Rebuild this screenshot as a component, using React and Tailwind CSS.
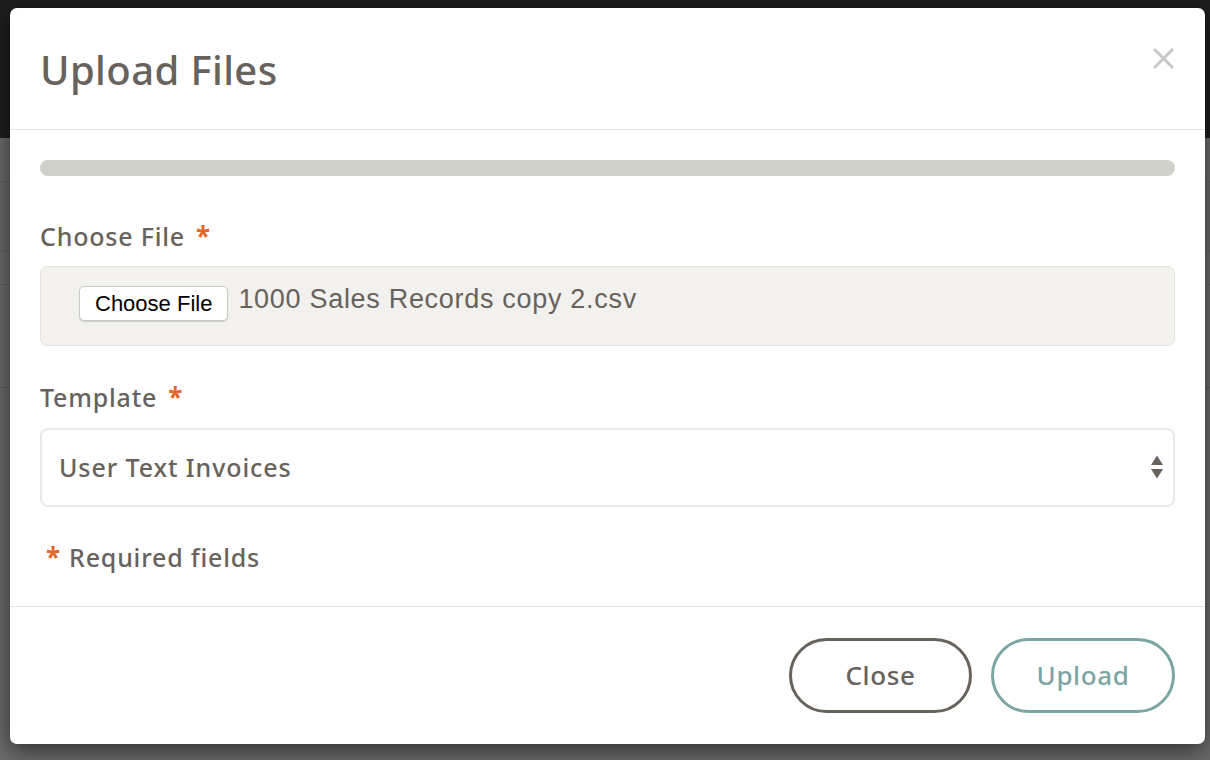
import { useState } from 'react';

const sans = { fontFamily: '"Noto Sans", "Open Sans", sans-serif' };
const sysFont = { fontFamily: '"Liberation Sans", Arial, sans-serif' };

function Asterisk({ className = '' }) {
  return <span className={`text-[#e4662a] font-bold text-[26px] tracking-normal ${className}`}>*</span>;
}

function BackgroundPage() {
  // page behind the modal, dimmed by the backdrop
  return (
    <div className="h-[760px] w-full flex flex-col bg-[#6a6a6a]">
      <div className="h-[138px] bg-[#1e1e1e] shrink-0" />
      <div className="h-[44px] border-b border-[#5e5e5e]" />
      <div className="h-[70px] border-b border-[#5e5e5e] bg-[#676767]" />
      <div className="h-[33px] border-b border-[#5e5e5e]" />
      <div className="h-[103px] border-b border-[#5b5b5b]" />
      <div className="flex-1" />
    </div>
  );
}

export default function App() {
  const [template] = useState('User Text Invoices');

  return (
    <div className="relative h-[760px] w-full overflow-hidden" style={sans}>
      <BackgroundPage />

      <div className="absolute left-[10px] top-[8px] w-[1195px] h-[736px] bg-white rounded-[7px] shadow-[0_6px_22px_rgba(0,0,0,0.55)] flex flex-col text-[#67625c]">
        {/* Header */}
        <div className="h-[122px] shrink-0 border-b border-[#e4e4e4] px-[30px] flex items-start justify-between">
          <h1 className="mt-[38px] text-[40px] leading-[48px] font-medium tracking-[0.4px]">Upload Files</h1>
          <button className="mt-[39px] mr-[1px] w-[22px] h-[22px] flex items-center justify-center">
            <svg width="21" height="21" viewBox="0 0 20 20">
              <path d="M2 2 L18 18 M18 2 L2 18" stroke="#c8c8c8" strokeWidth="2.8" strokeLinecap="square" />
            </svg>
          </button>
        </div>

        {/* Body */}
        <div className="flex-1 px-[30px] pt-[30px]">
          <div className="h-[16px] w-full rounded-full bg-[#cfd0ca]" />

          <label className="mt-[46px] flex items-center h-[30px] text-[25px] font-medium tracking-[0.8px]">
            Choose File <Asterisk className="ml-[11px] mt-[-2px]" />
          </label>
          <div className="mt-[14px] h-[80px] rounded-[7px] border border-[#e5e4df] bg-[#f2f1ee] pl-[38px] pt-[19px] flex items-start">
            <span className="h-[35px] px-[15px] flex items-center rounded-[5px] border border-[#c9c9c9] bg-white shadow-[0_1px_1px_rgba(0,0,0,0.15)] text-[22px] text-black" style={sysFont}>
              Choose File
            </span>
            <span className="ml-[10px] mt-[-5px] text-[27px] leading-[36px] tracking-[0.7px] text-[#67625c]" style={sysFont}>
              1000 Sales Records copy 2.csv
            </span>
          </div>

          <label className="mt-[37px] flex items-center h-[30px] text-[25px] font-medium tracking-[0.8px]">
            Template <Asterisk className="ml-[11px] mt-[-2px]" />
          </label>
          <div className="mt-[15px] h-[79px] rounded-[8px] border-2 border-[#eae9e4] bg-white pl-[17px] pr-[8px] flex items-center justify-between">
            <span className="text-[25px] font-medium tracking-[0.9px]">{template}</span>
            <svg width="16" height="28" viewBox="0 0 16 28">
              <path d="M2 11 L8 1.5 L14 11 Z" fill="#67625c" />
              <path d="M2 15 L14 15 L8 24.5 Z" fill="#67625c" />
            </svg>
          </div>

          <p className="mt-[36px] pl-[6px] flex items-center h-[30px] text-[25px] font-medium tracking-[0.8px]">
            <Asterisk className="mr-[8px] mt-[-2px]" />
            <span className="ml-[1px]">Required fields</span>
          </p>
        </div>

        {/* Footer */}
        <div className="h-[138px] shrink-0 border-t border-[#e4e4e4] px-[30px] flex items-center justify-end gap-[19px]">
          <button className="w-[183px] h-[75px] rounded-full border-[3px] border-[#67625c] text-[26px] font-medium tracking-[0.6px] text-[#67625c]">
            Close
          </button>
          <button className="w-[184px] h-[75px] rounded-full border-[3px] border-[#7ba4a3] text-[26px] font-medium tracking-[0.6px] text-[#7ba4a3]">
            Upload
          </button>
        </div>
      </div>
    </div>
  );
}
